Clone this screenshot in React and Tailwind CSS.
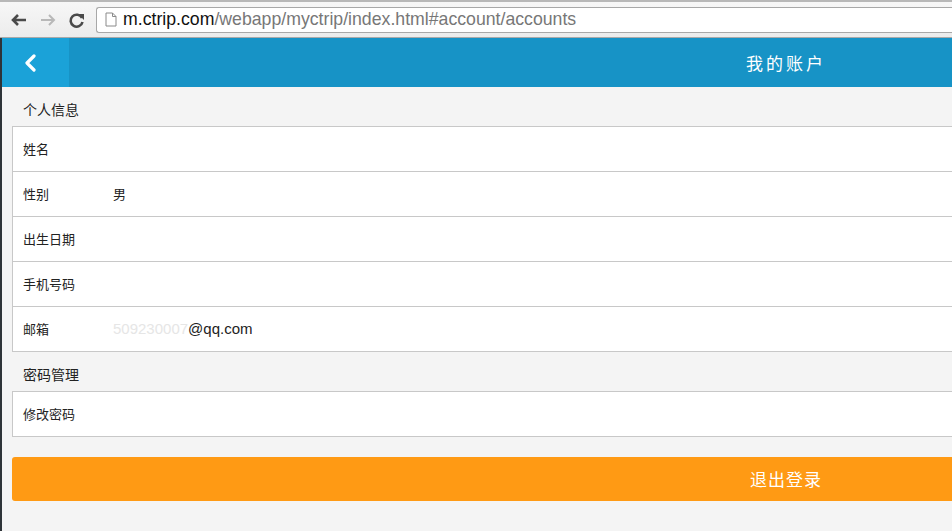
import React from "react";

const cjk = { fontFamily: '"Noto Sans CJK SC", "Liberation Sans", sans-serif' };

const Row = ({ label, value, last }) => (
  <div
    className={`flex items-center px-[10px] text-[13px] text-[#222] ${
      last ? "h-[44px]" : "h-[45px] border-b border-[#c8c8c8]"
    }`}
  >
    <span className="w-[90px]">{label}</span>
    <span>{value}</span>
  </div>
);

const App = () => {
  return (
    <div className="w-[952px] h-[531px] overflow-hidden bg-[#f4f4f4] flex flex-col" style={cjk}>
      {/* browser toolbar */}
      <div className="h-[38px] shrink-0 flex items-center bg-gradient-to-b from-[#f7f7f7] to-[#ececec] border-t-2 border-[#b8b8b8] border-b border-b-[#a9a9a9]">
        <div className="flex items-center w-[96px] pl-[10px] gap-[11px]">
          <svg width="18" height="14" viewBox="0 0 18 14">
            <path d="M8 2 L3 7 L8 12 M3 7 H16" stroke="#4a4a4a" strokeWidth="2.6" fill="none" />
          </svg>
          <svg width="18" height="14" viewBox="0 0 18 14">
            <path d="M10 2 L15 7 L10 12 M15 7 H2" stroke="#b8b8b8" strokeWidth="2" fill="none" />
          </svg>
          <svg width="18" height="18" viewBox="0 0 18 18">
            <path d="M14 7 A6 6 0 1 0 14.5 11" stroke="#4a4a4a" strokeWidth="2.6" fill="none" />
            <path d="M10 3 L16 3 L16 9 Z" fill="#4a4a4a" />
          </svg>
        </div>
        <div className="flex-1 h-[26px] flex items-center bg-white border border-[#a8a8a8] rounded-l-[3px] border-r-0 pl-[8px]">
          <svg width="12" height="15" viewBox="0 0 12 15" className="mr-[6px]">
            <path d="M1 1 H7.5 L11 4.5 V14 H1 Z M7.5 1 V4.5 H11" stroke="#8a8a8a" strokeWidth="1" fill="white" />
          </svg>
          <span className="text-[17.7px] text-[#777]" style={{ fontFamily: '"Liberation Sans", sans-serif' }}>
            <span className="text-[#111]">m.ctrip.com</span>/webapp/myctrip/index.html#account/accounts
          </span>
        </div>
      </div>

      {/* page */}
      <div className="flex-1 flex border-l-2 border-[#2e3338]">
        <div className="w-[1568px] shrink-0 flex flex-col">
          <div className="h-[49px] flex items-center bg-[#1793c6] relative">
            <div className="w-[67px] h-full bg-[#1ba2d8] flex items-center pl-[22px]">
              <svg width="14" height="18" viewBox="0 0 14 18">
                <path d="M10 2 L3 9 L10 16" stroke="white" strokeWidth="3.2" fill="none" strokeLinecap="round" strokeLinejoin="round" />
              </svg>
            </div>
            <div className="absolute inset-0 flex items-center justify-center text-white text-[17px] tracking-[3px] pointer-events-none">
              我的账户
            </div>
          </div>

          <div className="px-[10px]">
            <div className="pl-[11px] h-[39px] flex items-center text-[14px] text-[#222] pt-[6px]">个人信息</div>
            <div className="bg-white border border-[#c8c8c8]">
              <Row label="姓名" value="" />
              <Row label="性别" value="男" />
              <Row label="出生日期" value="" />
              <Row label="手机号码" value="" />
              <Row
                label="邮箱"
                last
                value={
                  <span className="text-[15px]" style={{ fontFamily: '"Liberation Sans", sans-serif' }}>
                    <span className="text-[#e6e6e6]">509230007</span>@qq.com
                  </span>
                }
              />
            </div>
            <div className="pl-[11px] h-[39px] flex items-center text-[14px] text-[#222] pt-[6px]">密码管理</div>
            <div className="bg-white border border-[#c8c8c8]">
              <Row label="修改密码" value="" last />
            </div>
            <button className="mt-[20px] w-full h-[44px] rounded-[3px] bg-[#ff9a14] text-white text-[17px] tracking-[1px]" style={cjk}>
              退出登录
            </button>
          </div>
        </div>
      </div>
    </div>
  );
};

export default App;
